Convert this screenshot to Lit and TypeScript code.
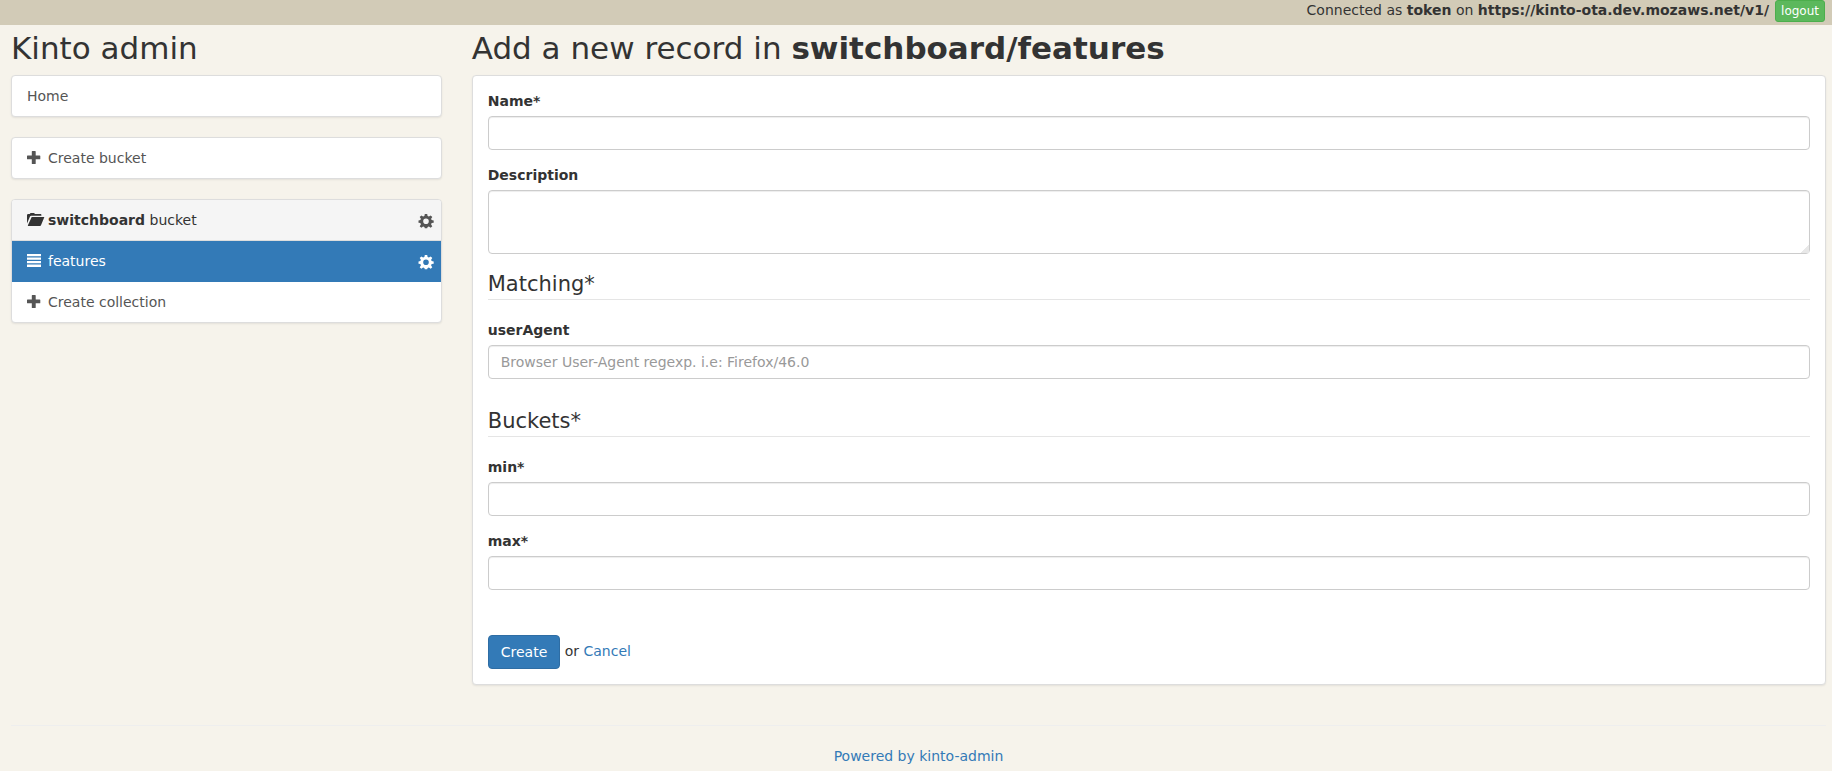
import { LitElement, html, css, svg } from "lit";
import { customElement, property } from "lit/decorators.js";

const plus = svg`<path d="M5.4 0h2.7q.6 0 .6 .6v3.9h4q.6 0 .6 .6v2.6q0 .6-.6 .6h-4v4.1q0 .6-.6 .6h-2.7q-.6 0-.6-.6v-4.1h-4.2q-.6 0-.6-.6v-2.6q0-.6 .6-.6h4.2v-3.9q0-.6 .6-.6z"/>`;
const list = svg`<path d="M0 0h14v2.3h-14zM0 3.5h14v2.3h-14zM0 7h14v2.3h-14zM0 10.6h14v2.4h-14z"/>`;
const folder = svg`<path d="M0 10.6V2.3q0-1.2 1.2-1.2h1.6q.2-1.1 1.2-1.1h2.6q1 0 1.3 1.1h5.8q.7 0 .7 .8v.9H4.1q-.8 0-1.1 .7z"/><path d="M4.7 3.9H17.1q.3 0 .2 .4l-3.2 7.8q-.3 .9-1.1 .9H1.4q-.8 0-.5-.8z"/>`;
const cog = svg`<path fill-rule="evenodd" d="M5.8 0h2.4l.4 2.1l1.3 .5l1.8-1.2l1.6 1.6l-1.2 1.8l.5 1.3l2.1 .3v2.4l-2.1 .3l-.5 1.3l1.2 1.8l-1.6 1.6l-1.8-1.2l-1.3 .5l-.4 1.2h-2.4l-.4-1.2l-1.3-.5l-1.8 1.2l-1.6-1.6l1.2-1.8l-.5-1.3l-1.9-.3v-2.4l1.9-.3l.5-1.3l-1.2-1.8l1.6-1.6l1.8 1.2l1.3-.5zM7 4.5a2.8 2.8 0 1 0 0 5.6a2.8 2.8 0 1 0 0-5.6z"/>`;

const icons: Record<string, unknown> = { plus, list, folder, cog };

@customElement("glyph-icon")
class GlyphIcon extends LitElement {
  static styles = css`
    :host { display: inline-block; width: 14px; height: 14px; }
    svg { display: block; width: 14px; height: 14px; overflow: visible; fill: currentColor; }
  `;
  @property() name = "plus";
  render() {
    return html`<svg viewBox="0 0 14 14" aria-hidden="true">${icons[this.name]}</svg>`;
  }
}

@customElement("app-root")
class AppRoot extends LitElement {
  static styles = css`
    :host {
      display: block;
      min-height: 100vh;
      background: #f6f3eb;
      color: #333;
      font: 14px/20px "DejaVu Sans", Verdana, sans-serif;
    }
    * { box-sizing: border-box; }
    a { color: #337ab7; text-decoration: none; }
    .session {
      display: flex;
      justify-content: flex-end;
      align-items: flex-start;
      gap: 6px;
      height: 25px;
      padding-right: 7px;
      background: #d2cbb7;
    }
    .btn {
      border: 1px solid;
      color: #fff;
      font-family: inherit;
      cursor: pointer;
    }
    .logout {
      padding: 1px 5px;
      border-radius: 3px;
      border-color: #4cae4c;
      background: #5cb85c;
      font-size: 12px;
      line-height: 18px;
    }
    .layout {
      display: grid;
      grid-template-columns: calc(25% - 23px) minmax(0, 1fr);
      column-gap: 30px;
      padding: 0 6px 0 11px;
    }
    h1 { margin: 6px 0 10px; font-size: 31px; line-height: 34px; font-weight: 400; }
    .group {
      margin-bottom: 20px;
      border: 1px solid #ddd;
      border-radius: 4px;
      background: #fff;
      box-shadow: 0 1px 2px rgba(0, 0, 0, 0.08);
      overflow: hidden;
    }
    .item {
      display: flex;
      align-items: center;
      height: 40px;
      padding: 0 8px 0 15px;
    }
    .item + .item { height: 41px; border-top: 1px solid #ddd; }
    .link { display: flex; flex: 1; align-items: center; gap: 7px; color: #555; }
    .heading { background: #f5f5f5; }
    .heading .link { color: #333; }
    .settings { display: flex; padding-top: 2px; color: #555; }
    .item.active { background: #337ab7; }
    .item.active + .item { border-color: #337ab7; }
    .active a { color: #fff; }
    .panel {
      padding: 15px;
      border: 1px solid #ddd;
      border-radius: 4px;
      background: #fff;
      box-shadow: 0 1px 2px rgba(0, 0, 0, 0.08);
    }
    .field { margin-bottom: 15px; }
    label { display: block; margin-bottom: 5px; font-weight: 700; }
    .control {
      display: block;
      width: 100%;
      height: 34px;
      padding: 6px 12px;
      border: 1px solid #ccc;
      border-radius: 4px;
      background: #fff;
      box-shadow: inset 0 1px 1px rgba(0, 0, 0, 0.075);
      color: #555;
      font: inherit;
    }
    .control::placeholder { color: #999; opacity: 1; }
    textarea.control { height: 64px; resize: vertical; }
    textarea::-webkit-resizer {
      background: linear-gradient(135deg, transparent 72%, #e8e8e8 72%);
    }
    fieldset { min-width: 0; margin: 0 0 27px; padding: 0; border: 0; }
    fieldset .field:last-child { margin-bottom: 0; }
    legend {
      width: 100%;
      margin-bottom: 20px;
      padding: 0;
      border-bottom: 1px solid #e5e5e5;
      font-size: 21px;
      line-height: 30px;
    }
    .actions { padding-top: 18px; }
    .create {
      padding: 6px 12px;
      border-radius: 4px;
      border-color: #2e6da4;
      background: #337ab7;
      font-size: 14px;
      line-height: 20px;
      vertical-align: middle;
    }
    footer {
      margin: 40px 6px 0 11px;
      padding: 20px 0 5px;
      border-top: 1px solid #eee;
      text-align: center;
    }
  `;

  field(id: string, label: string, placeholder = "") {
    return html`<div class="field">
      <label for=${id}>${label}</label>
      <input class="control" id=${id} type="text" placeholder=${placeholder} />
    </div>`;
  }

  render() {
    return html`
      <header class="session">
        <span>Connected as <strong>token</strong> on <strong>https://kinto-ota.dev.mozaws.net/v1/</strong></span>
        <button class="btn logout" type="button">logout</button>
      </header>
      <div class="layout">
        <aside>
          <h1>Kinto admin</h1>
          <nav class="group">
            <div class="item"><a class="link" href="#home">Home</a></div>
          </nav>
          <nav class="group">
            <div class="item">
              <a class="link" href="#create-bucket"><glyph-icon name="plus"></glyph-icon>Create bucket</a>
            </div>
          </nav>
          <nav class="group">
            <div class="item heading">
              <span class="link"><glyph-icon name="folder"></glyph-icon><span><strong>switchboard</strong> bucket</span></span>
              <a class="settings" href="#bucket-settings" aria-label="Bucket settings"><glyph-icon name="cog"></glyph-icon></a>
            </div>
            <div class="item active">
              <a class="link" href="#features"><glyph-icon name="list"></glyph-icon>features</a>
              <a class="settings" href="#collection-settings" aria-label="Collection settings"><glyph-icon name="cog"></glyph-icon></a>
            </div>
            <div class="item">
              <a class="link" href="#create-collection"><glyph-icon name="plus"></glyph-icon>Create collection</a>
            </div>
          </nav>
        </aside>
        <main>
          <h1>Add a new record in <strong>switchboard/features</strong></h1>
          <form class="panel">
            ${this.field("name", "Name*")}
            <div class="field">
              <label for="description">Description</label>
              <textarea class="control" id="description"></textarea>
            </div>
            <fieldset>
              <legend>Matching*</legend>
              ${this.field("userAgent", "userAgent", "Browser User-Agent regexp. i.e: Firefox/46.0")}
            </fieldset>
            <fieldset>
              <legend>Buckets*</legend>
              ${this.field("min", "min*")} ${this.field("max", "max*")}
            </fieldset>
            <div class="actions">
              <button class="btn create" type="button">Create</button>
              or <a href="#cancel">Cancel</a>
            </div>
          </form>
        </main>
      </div>
      <footer><a href="#kinto-admin">Powered by kinto-admin</a></footer>
    `;
  }
}
